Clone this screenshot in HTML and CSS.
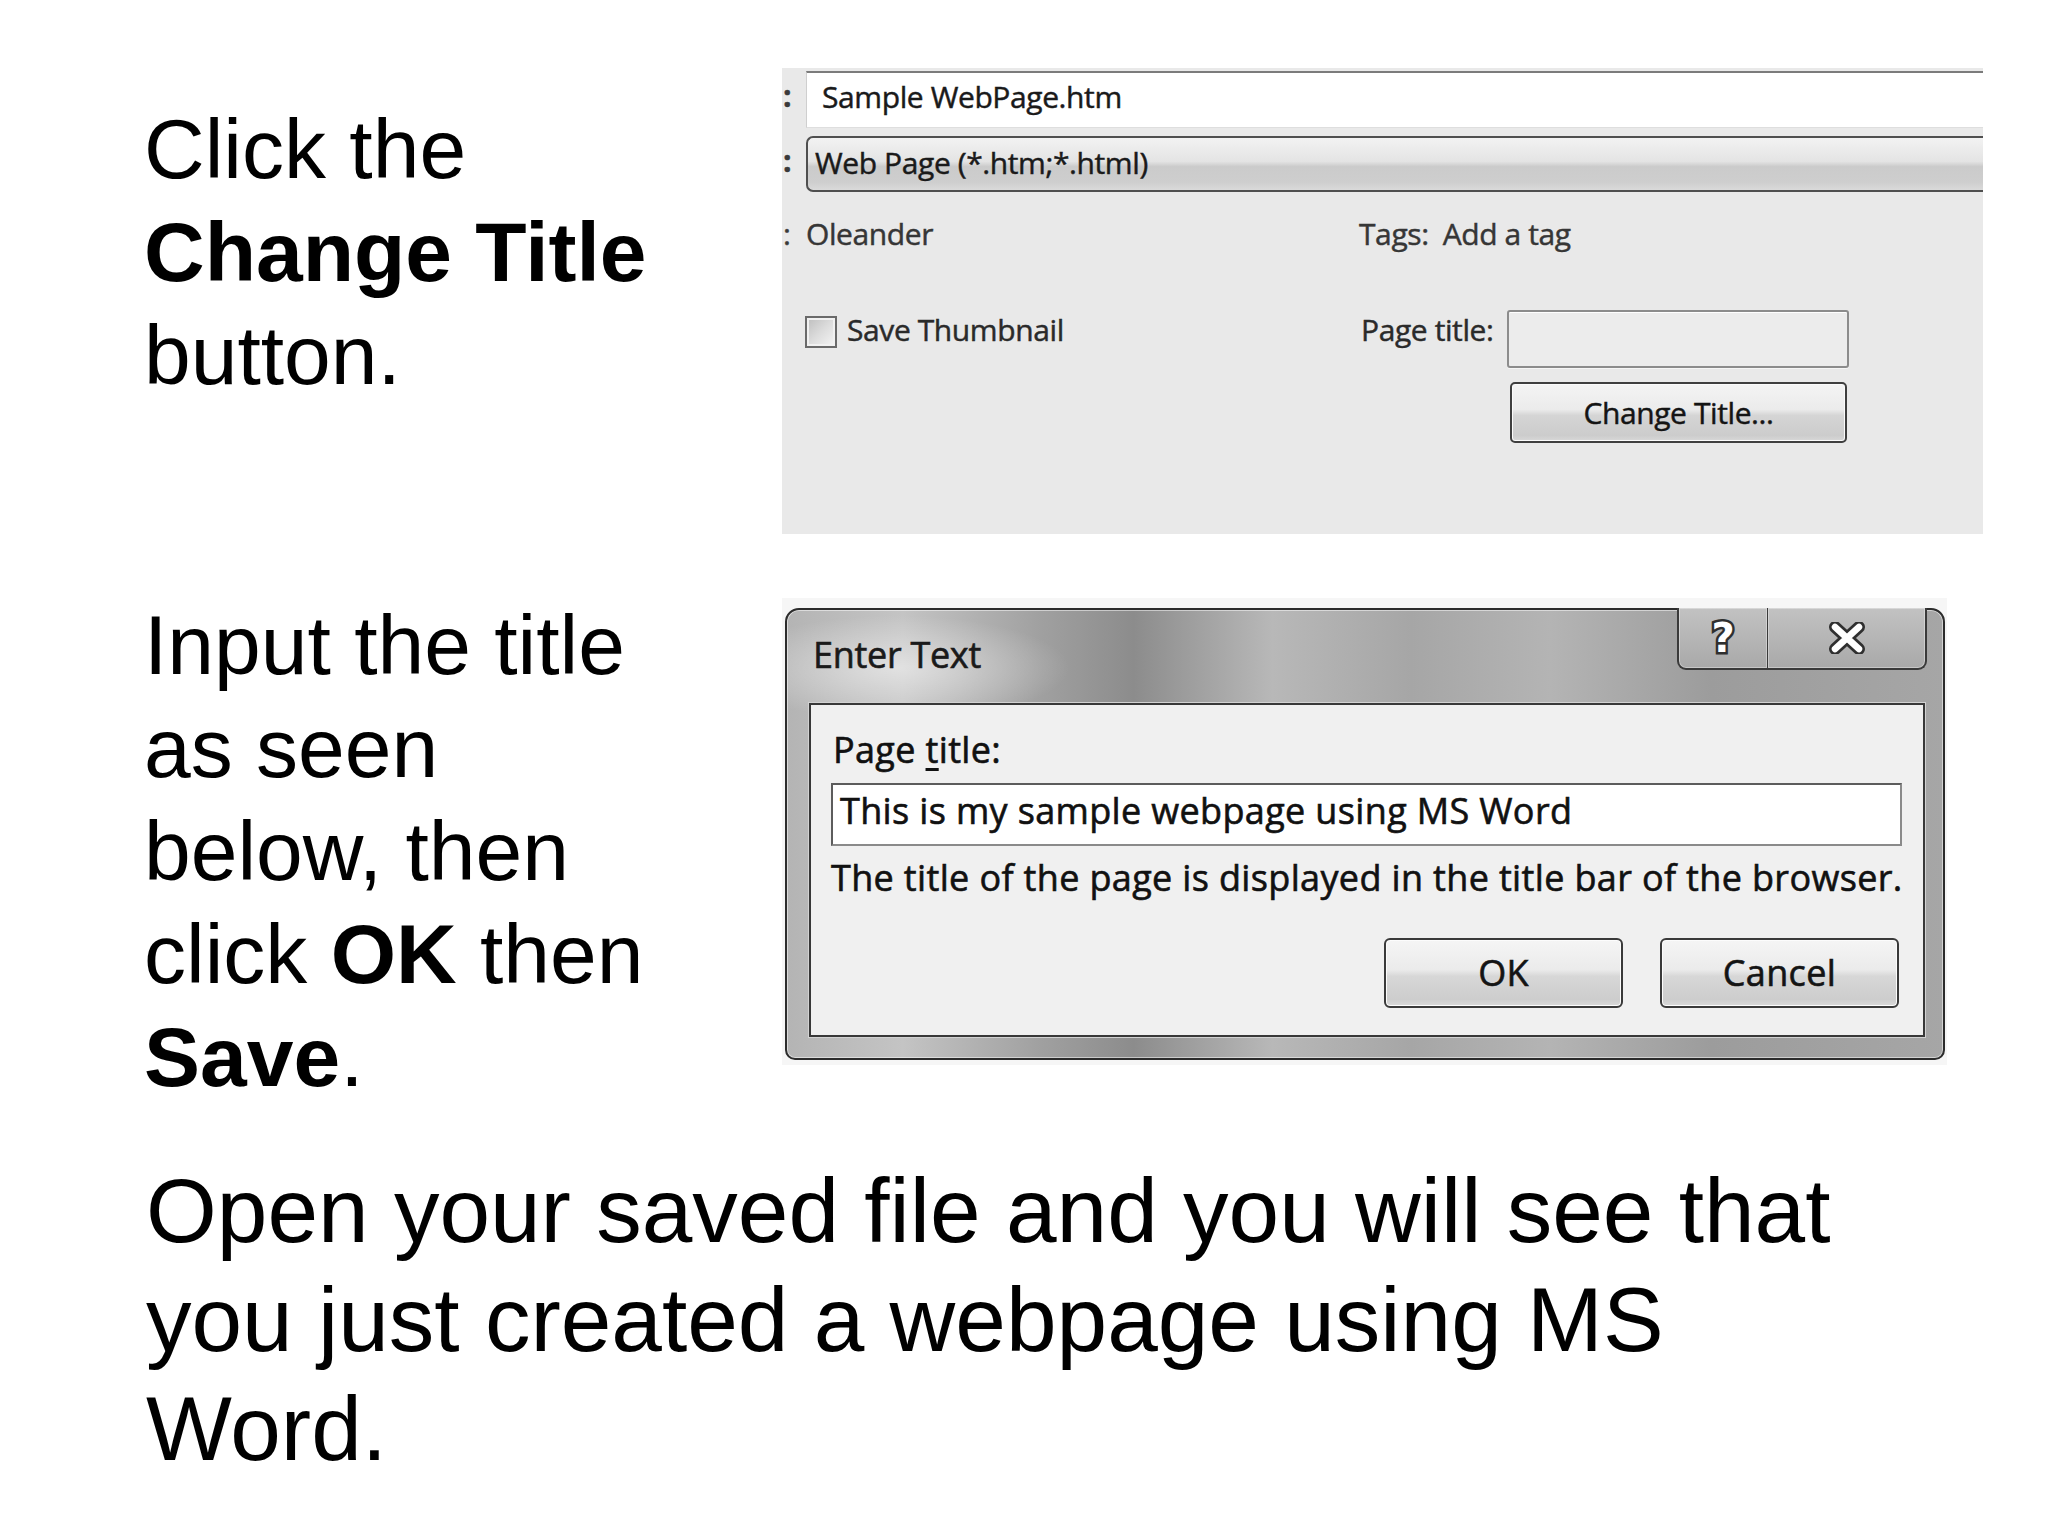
FILE: index.html
```html
<!DOCTYPE html>
<html lang="en">
<head>
<meta charset="utf-8">
<title>Change Title</title>
<link rel="stylesheet" href="styles.css">
</head>
<body>
<main class="slide">
  <section class="row row-one">
    <p class="step step-one">Click the<br><b>Change Title</b><br>button.</p>
    <div class="save-panel">
      <div class="field-row file-row">
        <span class="colon">:</span>
        <div class="file-input">Sample WebPage.htm</div>
      </div>
      <div class="field-row type-row">
        <span class="colon">:</span>
        <div class="type-combo">Web Page (*.htm;*.html)</div>
      </div>
      <div class="meta-row author-row">
        <div class="meta-left"><span class="colon">:</span><span class="muted">Oleander</span></div>
        <div class="meta-right muted"><span class="tags-label">Tags:</span>Add a tag</div>
      </div>
      <div class="meta-row thumb-row">
        <div class="meta-left">
          <span class="checkbox"></span>
          <span class="thumb-label">Save Thumbnail</span>
        </div>
        <div class="meta-right page-title-cell">
          <span class="pt-label">Page title:</span>
          <span class="pt-input"></span>
        </div>
      </div>
      <div class="change-row">
        <div class="change-btn">Change Title...</div>
      </div>
    </div>
  </section>

  <section class="row row-two">
    <p class="step step-two">Input the title<br>as seen<br>below, then<br>click <b>OK</b> then<br><b>Save</b>.</p>
    <div class="dialog-shot">
      <div class="dialog">
        <div class="titlebar">
          <div class="title">Enter Text</div>
          <div class="caption-buttons">
            <div class="cap-btn cap-help"><span class="help-glyph">?</span></div>
            <div class="cap-btn cap-close">
              <svg width="40" height="32" viewBox="0 0 40 32" aria-hidden="true">
                <path d="M8 5 L32 27 M32 5 L8 27" stroke="#2f2f2f" stroke-width="12" stroke-linecap="round" fill="none"/>
                <path d="M8 5 L32 27 M32 5 L8 27" stroke="#ffffff" stroke-width="6.5" stroke-linecap="round" fill="none"/>
              </svg>
            </div>
          </div>
        </div>
        <div class="panel">
          <div class="dlg-label">Page <span class="accel">t</span>itle:</div>
          <div class="dlg-input">This is my sample webpage using MS Word</div>
          <div class="dlg-desc">The title of the page is displayed in the title bar of the browser.</div>
          <div class="dlg-actions">
            <div class="dlg-btn">OK</div>
            <div class="dlg-btn">Cancel</div>
          </div>
        </div>
      </div>
    </div>
  </section>

  <p class="closing">Open your saved file and you will see that<br>you just created a webpage using MS<br>Word.</p>
</main>
</body>
</html>
```

FILE: styles.css
```css
html, body {
  margin: 0;
  padding: 0;
  background: #ffffff;
}

body {
  font-family: "Liberation Sans", Arial, sans-serif;
  color: #000;
}

.slide {
  padding: 68px 0 0 144px;
}

.row {
  display: flex;
  align-items: flex-start;
}

.step {
  width: 638px;
  flex: none;
  margin: 0;
  font-size: 84px;
  line-height: 103px;
  white-space: nowrap;
}

.step-one {
  margin-top: 30px;
}

.row-two {
  margin-top: 60px;
}

.closing {
  margin: 47px 0 0 2px;
  font-size: 91px;
  line-height: 109px;
  white-space: nowrap;
}

/* ---------- Save As panel ---------- */

.save-panel {
  width: 1201px;
  height: 466px;
  box-sizing: border-box;
  padding-top: 3px;
  background: #e9e9e9;
  overflow: hidden;
  font-family: "Open Sans", "Noto Sans", sans-serif;
  font-size: 30px;
  letter-spacing: -0.4px;
  color: #1a1a1a;
  -webkit-text-stroke: 0.45px currentColor;
}

.field-row {
  display: flex;
}

.colon {
  width: 24px;
  flex: none;
  box-sizing: border-box;
  padding-left: 1px;
  color: #3a3a3a;
  font-weight: 700;
}

.file-row {
  height: 57px;
}

.file-row .colon,
.type-row .colon {
  line-height: 50px;
}

.file-input {
  flex: 1;
  margin-right: -14px;
  background: #ffffff;
  border-top: 2px solid #7b7b7b;
  border-left: 1px solid #cfcfcf;
  border-bottom: 1px solid #dedede;
  padding-left: 15px;
  line-height: 47px;
}

.type-row {
  height: 56px;
  margin-top: 8px;
}

.type-combo {
  flex: 1;
  margin-right: -14px;
  border: 2px solid #4f4f4f;
  border-right: none;
  border-radius: 7px 0 0 7px;
  background: linear-gradient(#f2f2f2 0%, #e4e4e4 45%, #cbcbcb 55%, #cecece 85%, #dadada 100%);
  padding-left: 7px;
  line-height: 49px;
}

.meta-row {
  display: grid;
  grid-template-columns: 577px 1fr;
  line-height: 40px;
}

.meta-left {
  display: flex;
  align-items: flex-start;
}

.muted {
  color: #363636;
}

.author-row {
  margin-top: 22px;
}

.author-row .colon {
  font-weight: 400;
}

.tags-label {
  margin-right: 14px;
}

.thumb-row {
  margin-top: 56px;
}

.checkbox {
  width: 32px;
  height: 32px;
  box-sizing: border-box;
  margin: 6px 0 0 23px;
  border: 2px solid #6a6a6a;
  background: linear-gradient(135deg, #bdbdbd 0%, #dcdcdc 50%, #f5f5f5 100%);
  box-shadow: inset 0 0 0 2px #f1f1f1;
}

.thumb-label {
  margin-left: 10px;
  color: #2a2a2a;
}

.page-title-cell {
  display: flex;
  align-items: flex-start;
}

.pt-label {
  width: 148px;
  flex: none;
  padding-left: 2px;
  box-sizing: border-box;
  color: #2a2a2a;
}

.pt-input {
  width: 342px;
  height: 58px;
  box-sizing: border-box;
  border: 2px solid #8c8c8c;
  border-radius: 3px;
  background: #ececec;
  box-shadow: inset 0 1px 0 #ffffff, 0 1px 0 #f6f6f6;
}

.change-row {
  margin-top: 14px;
  padding-left: 728px;
}

.change-btn {
  width: 337px;
  height: 61px;
  box-sizing: border-box;
  border: 2px solid #3f3f3f;
  border-radius: 5px;
  background: linear-gradient(#f4f4f4 0%, #ebebeb 45%, #d5d5d5 55%, #cccccc 90%, #d8d8d8 100%);
  box-shadow: inset 0 0 0 1px #fbfbfb;
  display: flex;
  align-items: center;
  justify-content: center;
  color: #141414;
}

/* ---------- Enter Text dialog ---------- */

.dialog-shot {
  margin-top: 4px;
  width: 1165px;
  height: 467px;
  box-sizing: border-box;
  padding: 10px 2px 5px 3px;
  background: #f6f6f6;
  font-family: "Open Sans", "Noto Sans", sans-serif;
  font-size: 36px;
  color: #111111;
  -webkit-text-stroke: 0.6px currentColor;
}

.dialog {
  width: 1160px;
  height: 452px;
  box-sizing: border-box;
  border: 2px solid #2c2c2c;
  border-radius: 14px 14px 10px 10px;
  padding: 0 18px 21px 22px;
  display: flex;
  flex-direction: column;
  background:
    radial-gradient(ellipse 230px 70px at 110px 58px, rgba(255, 255, 255, 0.5), rgba(255, 255, 255, 0) 75%),
    linear-gradient(90deg, #b4b4b4 0%, #c4c4c4 10%, #a0a0a0 22%, #8c8c8c 30%, #b8b8b8 42%, #a6a6a6 54%, #b4b4b4 66%, #9c9c9c 80%, #a6a6a6 100%);
  box-shadow: inset 0 0 0 1px rgba(255, 255, 255, 0.5);
}

.titlebar {
  height: 93px;
  flex: none;
  display: flex;
  justify-content: space-between;
  align-items: flex-start;
}

.title {
  padding: 21px 0 0 4px;
  line-height: 48px;
  letter-spacing: -0.3px;
  color: #1a1a1a;
}

.caption-buttons {
  display: flex;
  margin: -2px -2px 0 0;
  -webkit-text-stroke: 0;
}

.cap-btn {
  height: 62px;
  box-sizing: border-box;
  border: 2px solid #3a3a3a;
  border-top: none;
  background: linear-gradient(#c2c2c2, #a9a9a9);
  box-shadow: inset 0 0 0 1px rgba(255, 255, 255, 0.35);
  display: flex;
  align-items: center;
  justify-content: center;
}

.cap-help {
  width: 91px;
  border-right-width: 1px;
  border-radius: 0 0 0 9px;
}

.cap-close {
  width: 159px;
  border-left: none;
  border-radius: 0 0 9px 0;
}

.help-glyph {
  font-family: "DejaVu Sans", sans-serif;
  font-weight: 700;
  font-size: 40px;
  line-height: 1;
  color: #ffffff;
  -webkit-text-stroke: 5px #2f2f2f;
  paint-order: stroke fill;
}

.panel {
  flex: 1;
  border: 2px solid #383838;
  background: #f0f0f0;
  padding: 21px 21px 27px 22px;
  box-shadow: 0 0 0 1px #d2d2d2;
  letter-spacing: 0.35px;
}

.dlg-label {
  line-height: 48px;
}

.accel {
  text-decoration: underline;
  text-underline-offset: 5px;
}

.dlg-input {
  margin: 9px 0 0 -2px;
  height: 63px;
  box-sizing: border-box;
  border: 2px solid #5c5c5c;
  border-bottom-color: #8a8a8a;
  border-right-color: #8a8a8a;
  background: #ffffff;
  padding-left: 7px;
  line-height: 52px;
}

.dlg-desc {
  margin: 8px 0 0 -2px;
  line-height: 48px;
  white-space: nowrap;
}

.dlg-actions {
  display: flex;
  justify-content: flex-end;
  gap: 37px;
  margin: 36px 3px 0 0;
}

.dlg-btn {
  width: 239px;
  height: 70px;
  box-sizing: border-box;
  border: 2px solid #3a3a3a;
  border-radius: 6px;
  background: linear-gradient(#f5f5f5 0%, #ebebeb 45%, #d7d7d7 55%, #cdcdcd 90%, #dadada 100%);
  box-shadow: inset 0 0 0 1px #fcfcfc;
  display: flex;
  align-items: center;
  justify-content: center;
  line-height: 1;
  color: #141414;
}
```
